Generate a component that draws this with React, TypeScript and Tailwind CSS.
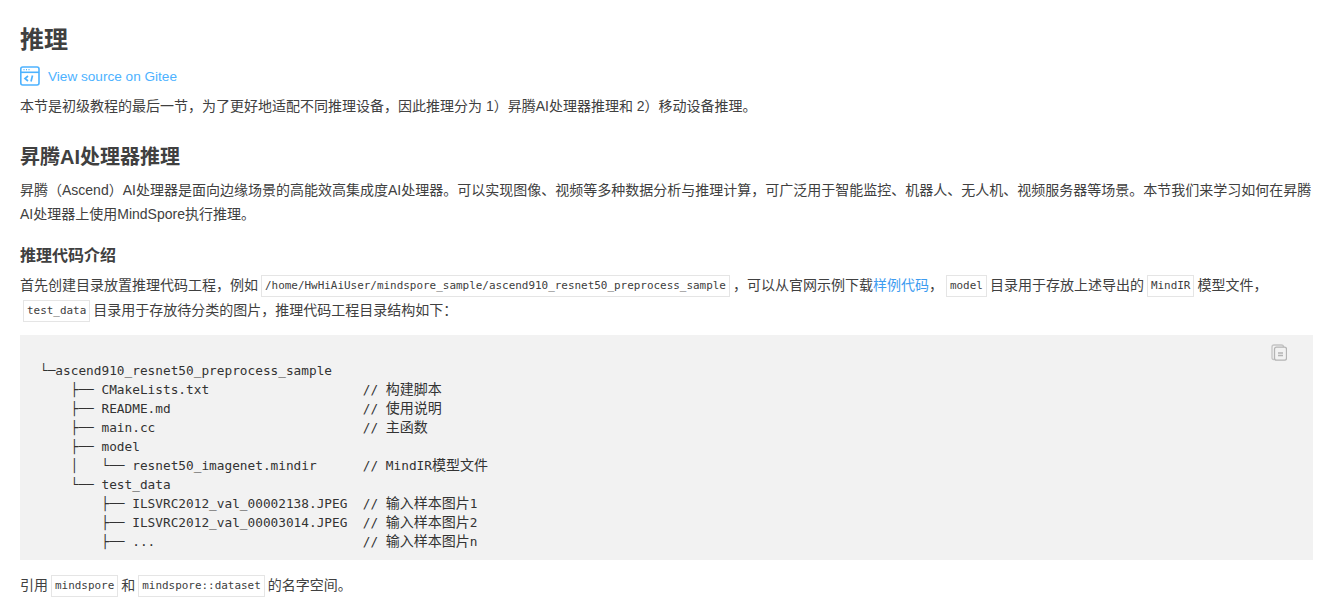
const sans = "font-['Liberation_Sans','Noto_Sans_CJK_SC',sans-serif]";

const tree = `└─ascend910_resnet50_preprocess_sample
    ├── CMakeLists.txt                    // 构建脚本
    ├── README.md                         // 使用说明
    ├── main.cc                           // 主函数
    ├── model
    │   └── resnet50_imagenet.mindir      // MindIR模型文件
    └── test_data
        ├── ILSVRC2012_val_00002138.JPEG  // 输入样本图片1
        ├── ILSVRC2012_val_00003014.JPEG  // 输入样本图片2
        ├── ...                           // 输入样本图片n`;

// the chinese comments are set larger than the latin mono text
function TreeText({ text }: { text: string }) {
  return (
    <>
      {text.split(/([\u4e00-\u9fff]+)/).map((part, i) =>
        i % 2 === 1 ? (
          <span key={i} className="text-[14px] leading-none">
            {part}
          </span>
        ) : (
          part
        ),
      )}
    </>
  );
}

function Code({ children }: { children: string }) {
  return (
    <code className="mx-[3px] inline-block border border-[#e5e5e5] bg-white px-[3px] align-middle font-['DejaVu_Sans_Mono','Noto_Sans_CJK_SC',monospace] text-[10.95px] leading-[20px] text-[#404040]">
      {children}
    </code>
  );
}

function SourceIcon() {
  return (
    <svg width="20" height="20" viewBox="0 0 20 20" fill="none" stroke="#4db2ff" strokeWidth="1.6">
      <rect x="0.8" y="1" width="18.2" height="18" rx="2" />
      <path d="M1 6.3h18" />
      <path d="M3.5 3.7h1M6 3.7h1M8.5 3.7h1" strokeWidth="1.3" />
      <path d="M8 10l-3 2.5L8 15" strokeWidth="1.7" />
      <path d="M12.5 9.5l-1.5 6" strokeWidth="1.7" />
    </svg>
  );
}

function CopyIcon() {
  return (
    <svg width="16" height="17" viewBox="0 0 16 17" fill="none" stroke="#c4c4c4" strokeWidth="1.3">
      <path d="M3 15.5H2.5A1.5 1.5 0 0 1 1 14V3a2 2 0 0 1 2-2h7.5a2 2 0 0 1 2 2" />
      <rect x="3.5" y="3.2" width="12" height="13" rx="2" stroke="#b4b4b4" />
      <path d="M7 9h5M7 11.5h5" stroke="#b4b4b4" />
    </svg>
  );
}

export default function App() {
  return (
    <div className={`${sans} h-[599px] overflow-hidden bg-white pl-5 pr-[19px] text-sm text-[#404040]`}>

      {/* TITLE */}
      <h1 className="pt-[24px] text-2xl leading-[32px] font-bold">推理</h1>

      <a className="mt-[7px] flex h-[26px] items-center gap-2 text-[#4db2ff]">
        <SourceIcon />
        <span className="pt-[2px] text-[13.6px]">View source on Gitee</span>
      </a>

      <p className="mt-[5px] leading-[24px]">
        本节是初级教程的最后一节，为了更好地适配不同推理设备，因此推理分为 1）昇腾AI处理器推理和 2）移动设备推理。
      </p>

      {/* ASCEND */}
      <h2 className="mt-[25px] text-xl leading-[28px] font-bold">昇腾AI处理器推理</h2>

      <p className="mt-[7px] leading-[24px]">
        昇腾（Ascend）AI处理器是面向边缘场景的高能效高集成度AI处理器。可以实现图像、视频等多种数据分析与推理计算，可广泛用于智能监控、机器人、无人机、视频服务器等场景。本节我们来学习如何在昇腾AI处理器上使用MindSpore执行推理。
      </p>

      <h3 className="mt-[18px] text-base leading-[24px] font-bold">推理代码介绍</h3>

      <p className="mt-[5px] leading-[25px]">
        首先创建目录放置推理代码工程，例如
        <Code>/home/HwHiAiUser/mindspore_sample/ascend910_resnet50_preprocess_sample</Code>
        ，可以从官网示例下载<a className="text-[#3d9cf0]">样例代码</a>，
        <Code>model</Code>
        目录用于存放上述导出的
        <Code>MindIR</Code>
        模型文件，
        <Code>test_data</Code>
        目录用于存放待分类的图片，推理代码工程目录结构如下：
      </p>

      {/* TREE */}
      <div className="relative mt-[12px] h-[225px] bg-[#f2f2f2] pt-[26px] pl-[20px]">
        <div className="absolute top-[9px] right-[26px]">
          <CopyIcon />
        </div>
        <pre className="font-['DejaVu_Sans_Mono','Noto_Sans_CJK_SC',monospace] text-[12.78px] leading-[19px] text-[#333333]">
          <TreeText text={tree} />
        </pre>
      </div>

      <p className="mt-[13px] leading-[25px]">
        引用<Code>mindspore</Code>和<Code>mindspore::dataset</Code>的名字空间。
      </p>
    </div>
  );
}
